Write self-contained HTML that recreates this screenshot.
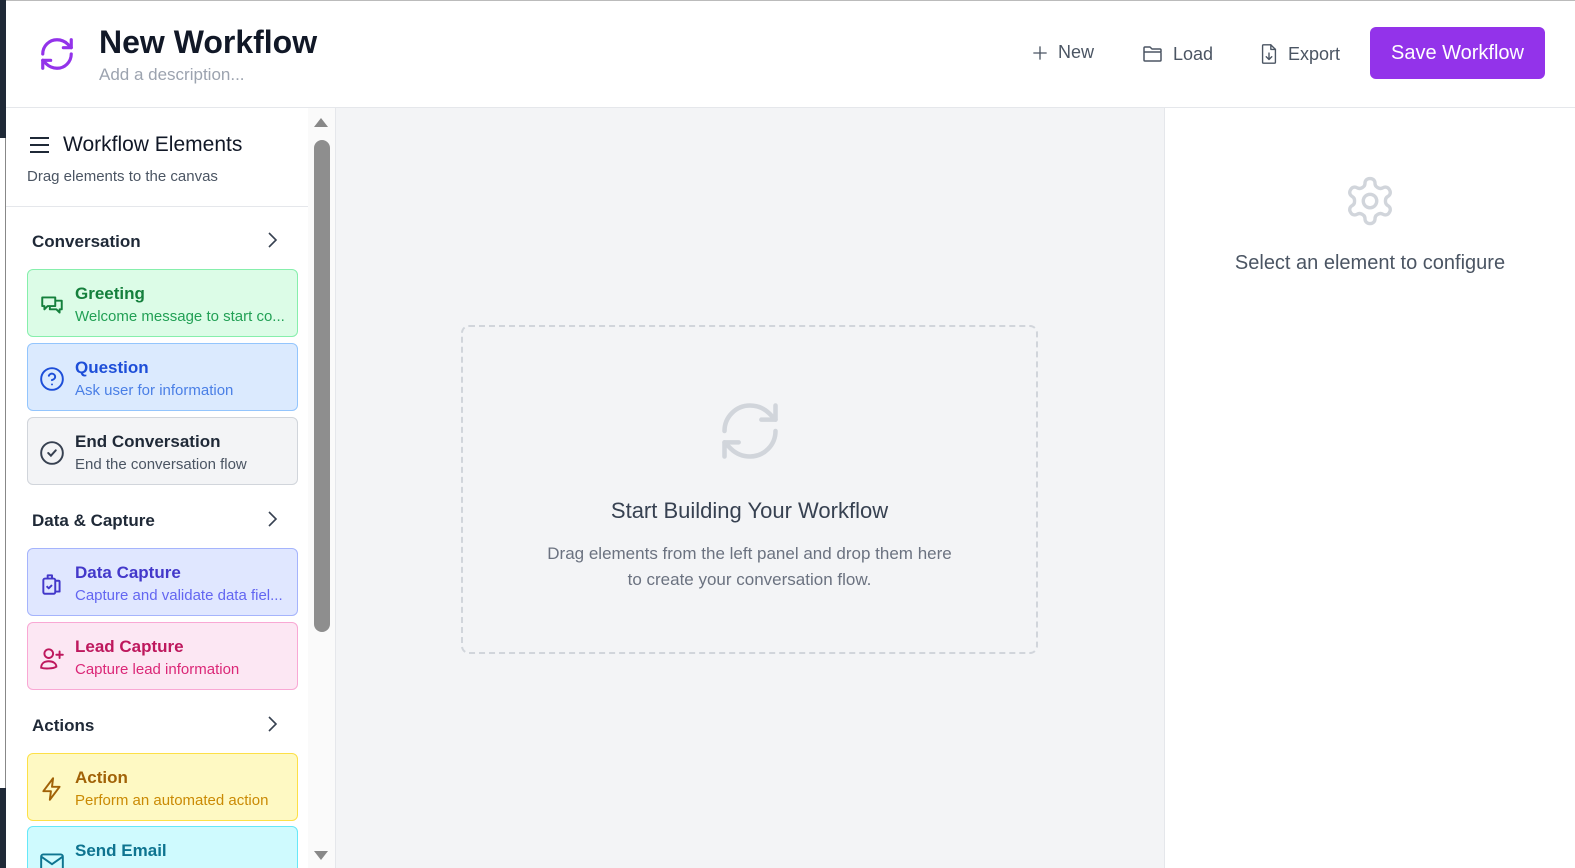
<!DOCTYPE html>
<html><head><style>
*{box-sizing:border-box;margin:0;padding:0}
html,body{width:1575px;height:868px;overflow:hidden}
body{font-family:"Liberation Sans",sans-serif;background:#fff;position:relative;color:#111827}
.abs{position:absolute}
svg{display:block}
.card{position:absolute;left:27px;width:271px;height:68px;border-radius:6px;border:1px solid}
.card .ic{position:absolute;left:11px;top:22px}
.card .t{position:absolute;left:47px;top:14px;font-size:17px;font-weight:bold}
.card .s{position:absolute;left:47px;top:38px;font-size:15px;white-space:nowrap}
.sec{position:absolute;left:32px;font-size:17px;font-weight:bold;color:#1f2937}
.chev{position:absolute;left:266px}
.btn{position:absolute;top:42px;font-size:18px;color:#4b5563;display:flex;align-items:center;gap:8px}
</style></head><body>
<div class="abs" style="left:0;top:0;width:1575px;height:1px;background:#bbb"></div>
<div class="abs" style="left:0;top:0;width:6px;height:138px;background:#1f2937"></div>
<div class="abs" style="left:0;top:788px;width:6px;height:80px;background:#1f2937"></div>
<div class="abs" style="left:5px;top:138px;width:1px;height:650px;background:#888"></div>
<div class="abs" style="left:6px;top:107px;width:1569px;height:1px;background:#e5e7eb"></div>
<svg class="abs" style="left:38px;top:35px" width="38" height="38" viewBox="0 0 24 24" fill="none" stroke="#9333ea" stroke-width="2" stroke-linecap="round" stroke-linejoin="round"><path d="M3 12a9 9 0 0 1 9-9 9.750 9.750 0 0 1 6.74 2.74L21 8"/><path d="M21 3v5h-5"/><path d="M21 12a9 9 0 0 1-9 9 9.75 9.75 0 0 1-6.74-2.74L3 16"/><path d="M8 16H3v5"/></svg>
<div class="abs" style="left:99px;top:24px;font-size:32px;font-weight:bold;color:#111827">New Workflow</div>
<div class="abs" style="left:99px;top:65px;font-size:17px;color:#9ca3af">Add a description...</div>
<div class="btn" style="left:1030px"><svg width="20" height="20" viewBox="0 0 24 24" fill="none" stroke="#4b5563" stroke-width="1.6"><path d="M12 4v16M4 12h16"/></svg>New</div>
<div class="btn" style="left:1141px"><svg width="24" height="24" viewBox="0 0 24 24" fill="none" stroke="#4b5563" stroke-width="1.5" stroke-linejoin="round"><path d="M3 18V6a1 1 0 0 1 1-1h5l2 2h8a1 1 0 0 1 1 1v2M3 18a1 1 0 0 0 1 1h15a1 1 0 0 0 1-1v-7a1 1 0 0 0-1-1H4a1 1 0 0 0-1 1z"/></svg>Load</div>
<div class="btn" style="left:1258px"><svg width="22" height="24" viewBox="0 0 24 24" fill="none" stroke="#4b5563" stroke-width="1.5" stroke-linejoin="round" stroke-linecap="round"><path d="M14 2H6a1 1 0 0 0-1 1v18a1 1 0 0 0 1 1h12a1 1 0 0 0 1-1V7z"/><path d="M14 2v5h5M12 11v7M9 15l3 3 3-3"/></svg>Export</div>
<div class="abs" style="left:1370px;top:27px;width:175px;height:52px;background:#9333ea;border-radius:6px;color:#fff;font-size:20px;text-align:center;line-height:52px">Save Workflow</div>
<div class="abs" style="left:308px;top:108px;width:27px;height:760px;background:#fafafa"></div>
<div class="abs" style="left:314px;top:118px;border-left:7px solid transparent;border-right:7px solid transparent;border-bottom:9px solid #888"></div>
<div class="abs" style="left:314px;top:140px;width:16px;height:492px;background:#8e8e8e;border-radius:8px"></div>
<div class="abs" style="left:314px;top:851px;border-left:7px solid transparent;border-right:7px solid transparent;border-top:9px solid #888"></div>
<div class="abs" style="left:335px;top:108px;width:1px;height:760px;background:#e5e7eb"></div>
<svg class="abs" style="left:29px;top:136px" width="22" height="18" viewBox="0 0 22 18" stroke="#1f2937" stroke-width="2"><path d="M1 2h19M1 9h19M1 16h19"/></svg>
<div class="abs" style="left:63px;top:133px;font-size:21px;color:#111827">Workflow Elements</div>
<div class="abs" style="left:27px;top:168px;font-size:15px;color:#4b5563">Drag elements to the canvas</div>
<div class="abs" style="left:6px;top:206px;width:302px;height:1px;background:#e5e7eb"></div>
<div class="sec" style="top:232px">Conversation</div>
<svg class="chev" style="top:231px" width="14" height="18" viewBox="0 0 14 18" fill="none" stroke="#374151" stroke-width="1.6"><path d="M3 2l7 7-7 7"/></svg>
<div class="card" style="top:269px;background:#dcfce7;border-color:#86efac"><svg class="ic" width="26" height="26" viewBox="0 0 24 24" fill="none" stroke="#15803d" stroke-width="1.8" stroke-linejoin="round"><path d="M3 5h12v8H8l-3 3v-3H3z"/><path d="M15 8h6v8h-2v3l-3-3h-6v-3"/></svg><div class="t" style="color:#15803d">Greeting</div><div class="s" style="color:#22a055">Welcome message to start co...</div></div>
<div class="card" style="top:343px;background:#dbeafe;border-color:#93c5fd"><svg class="ic" width="26" height="26" viewBox="0 0 24 24" fill="none" stroke="#1d4ed8" stroke-width="1.8" stroke-linecap="round"><circle cx="12" cy="12" r="10"/><path d="M9.1 9a3 3 0 0 1 5.8 1c0 2-3 3-3 3M12 17h.01"/></svg><div class="t" style="color:#1d4ed8">Question</div><div class="s" style="color:#4a7fe6">Ask user for information</div></div>
<div class="card" style="top:417px;background:#f3f4f6;border-color:#d1d5db"><svg class="ic" width="26" height="26" viewBox="0 0 24 24" fill="none" stroke="#374151" stroke-width="1.8" stroke-linecap="round"><circle cx="12" cy="12" r="10"/><path d="M8.5 12l2.5 2.5 4.5-5"/></svg><div class="t" style="color:#1f2937">End Conversation</div><div class="s" style="color:#4b5563">End the conversation flow</div></div>
<div class="sec" style="top:511px">Data &amp; Capture</div>
<svg class="chev" style="top:510px" width="14" height="18" viewBox="0 0 14 18" fill="none" stroke="#374151" stroke-width="1.6"><path d="M3 2l7 7-7 7"/></svg>
<div class="card" style="top:548px;background:#e0e7ff;border-color:#a5b4fc"><svg class="ic" width="26" height="26" viewBox="0 0 24 24" fill="none" stroke="#4338ca" stroke-width="1.8" stroke-linejoin="round"><rect x="4" y="7" width="11" height="14" rx="1.5"/><path d="M8 7V4h3M11 4h1v3M15 9h3a1 1 0 0 1 1 1v9h-4"/><path d="M7 14l2 2 3-3"/></svg><div class="t" style="color:#4338ca">Data Capture</div><div class="s" style="color:#6366f1">Capture and validate data fiel...</div></div>
<div class="card" style="top:622px;background:#fce7f3;border-color:#f9a8d4"><svg class="ic" width="26" height="26" viewBox="0 0 24 24" fill="none" stroke="#be185d" stroke-width="1.8" stroke-linecap="round"><circle cx="9" cy="8" r="4"/><path d="M2 21c0-4 3-6 7-6s7 2 7 5c-3 2-11 2-14 1zM19 6v6M16 9h6"/></svg><div class="t" style="color:#be185d">Lead Capture</div><div class="s" style="color:#db2777">Capture lead information</div></div>
<div class="sec" style="top:716px">Actions</div>
<svg class="chev" style="top:715px" width="14" height="18" viewBox="0 0 14 18" fill="none" stroke="#374151" stroke-width="1.6"><path d="M3 2l7 7-7 7"/></svg>
<div class="card" style="top:753px;background:#fef9c3;border-color:#fde047"><svg class="ic" width="26" height="26" viewBox="0 0 24 24" fill="none" stroke="#a16207" stroke-width="1.8" stroke-linejoin="round"><path d="M13 2L4 14h7l-1 8 9-12h-7z"/></svg><div class="t" style="color:#a16207">Action</div><div class="s" style="color:#ca8a04">Perform an automated action</div></div>
<div class="card" style="top:826px;background:#cffafe;border-color:#67e8f9;height:60px"><svg class="ic" width="26" height="26" viewBox="0 0 24 24" fill="none" stroke="#0e7490" stroke-width="1.8"><rect x="2" y="5" width="20" height="15" rx="2"/><path d="M2 7l10 7 10-7"/></svg><div class="t" style="color:#0e7490">Send Email</div></div>
<div class="abs" style="left:336px;top:108px;width:828px;height:760px;background:#f3f4f6"></div>
<div class="abs" style="left:461px;top:325px;width:577px;height:329px;border:2px dashed #d1d5db;border-radius:8px"></div>
<svg class="abs" style="left:713px;top:397px" width="74" height="68" viewBox="0 0 24 24" fill="none" stroke="#d1d5db" stroke-width="1.6" stroke-linecap="round" stroke-linejoin="round"><path d="M3 12a9 9 0 0 1 9-9 9.75 9.75 0 0 1 6.74 2.74L21 8"/><path d="M21 3v5h-5"/><path d="M21 12a9 9 0 0 1-9 9 9.75 9.75 0 0 1-6.74-2.74L3 16"/><path d="M8 16H3v5"/></svg>
<div class="abs" style="left:461px;width:577px;top:498px;text-align:center;font-size:22px;color:#374151">Start Building Your Workflow</div>
<div class="abs" style="left:461px;width:577px;top:541px;text-align:center;font-size:17px;color:#6b7280;line-height:26px">Drag elements from the left panel and drop them here<br>to create your conversation flow.</div>
<div class="abs" style="left:1164px;top:108px;width:1px;height:760px;background:#e5e7eb"></div>
<svg class="abs" style="left:1343px;top:174px" width="54" height="54" viewBox="0 0 24 24" fill="none" stroke="#d1d5db" stroke-width="1.5" stroke-linejoin="round"><path d="M12.22 2h-.44a2 2 0 0 0-2 2v.18a2 2 0 0 1-1 1.73l-.43.25a2 2 0 0 1-2 0l-.15-.08a2 2 0 0 0-2.730.73l-.22.38a2 2 0 0 0 .73 2.73l.15.1a2 2 0 0 1 1 1.72v.51a2 2 0 0 1-1 1.74l-.15.09a2 2 0 0 0-.73 2.73l.22.38a2 2 0 0 0 2.73.73l.15-.08a2 2 0 0 1 2 0l.43.25a2 2 0 0 1 1 1.73V20a2 2 0 0 0 2 2h.44a2 2 0 0 0 2-2v-.18a2 2 0 0 1 1-1.73l.43-.25a2 2 0 0 1 2 0l.15.08a2 2 0 0 0 2.73-.73l.22-.39a2 2 0 0 0-.73-2.73l-.15-.08a2 2 0 0 1-1-1.74v-.5a2 2 0 0 1 1-1.74l.15-.09a2 2 0 0 0 .73-2.73l-.22-.38a2 2 0 0 0-2.73-.73l-.15.08a2 2 0 0 1-2 0l-.43-.25a2 2 0 0 1-1-1.73V4a2 2 0 0 0-2-2z"/><circle cx="12" cy="12" r="3"/></svg>
<div class="abs" style="left:1165px;width:410px;top:252px;text-align:center;font-size:20px;color:#4b5563">Select an element to configure</div>
</body></html>
